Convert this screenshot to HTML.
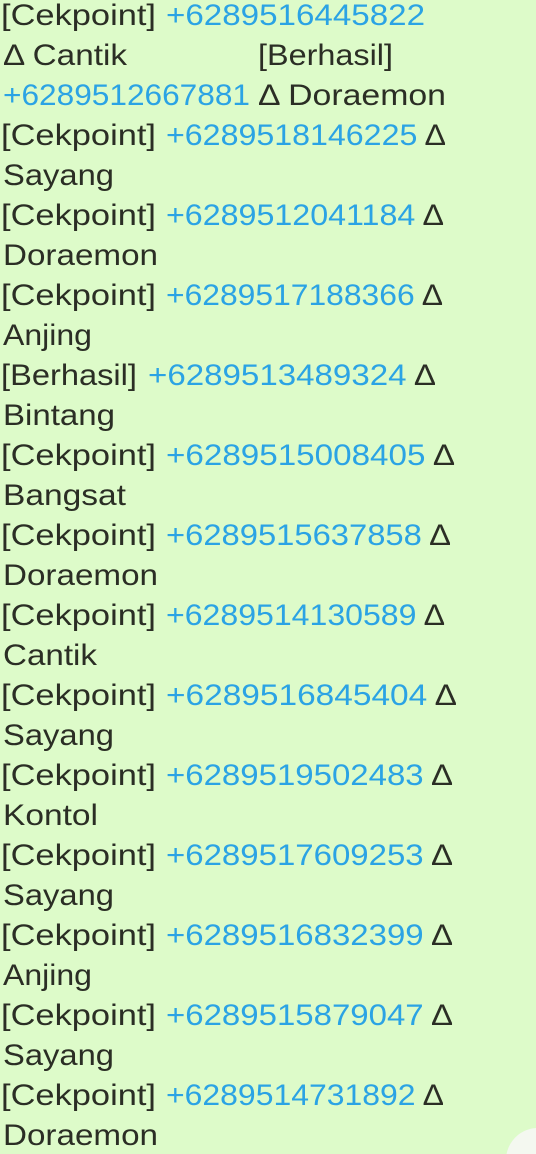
<!DOCTYPE html>
<html><head><meta charset="utf-8"><style>
html,body{margin:0;padding:0;background:#ddfbc9;width:536px;height:1154px;overflow:hidden}
svg{display:block}
text{font-family:"Liberation Sans",sans-serif;font-size:30px;fill:#2b2e25}
.b{fill:#2ba3e4}
</style></head><body>
<svg width="536" height="1154" viewBox="0 0 536 1154">
<text x="1" y="25" textLength="155" lengthAdjust="spacingAndGlyphs">[Cekpoint]</text>
<text x="166" y="25" textLength="259" lengthAdjust="spacingAndGlyphs" class="b">+6289516445822</text>
<text x="3" y="65" textLength="124" lengthAdjust="spacingAndGlyphs">Δ Cantik</text>
<text x="258" y="65" textLength="135" lengthAdjust="spacingAndGlyphs">[Berhasil]</text>
<text x="3" y="105" textLength="247" lengthAdjust="spacingAndGlyphs" class="b">+6289512667881</text>
<text x="258" y="105" textLength="188" lengthAdjust="spacingAndGlyphs">Δ Doraemon</text>

<text x="1" y="145" textLength="155" lengthAdjust="spacingAndGlyphs">[Cekpoint]</text>
<text x="166" y="145" textLength="280" lengthAdjust="spacingAndGlyphs"><tspan class="b">+6289518146225</tspan> Δ</text>
<text x="3" y="185" textLength="111" lengthAdjust="spacingAndGlyphs">Sayang</text>
<text x="1" y="225" textLength="155" lengthAdjust="spacingAndGlyphs">[Cekpoint]</text>
<text x="166" y="225" textLength="278" lengthAdjust="spacingAndGlyphs"><tspan class="b">+6289512041184</tspan> Δ</text>
<text x="3" y="265" textLength="155" lengthAdjust="spacingAndGlyphs">Doraemon</text>
<text x="1" y="305" textLength="155" lengthAdjust="spacingAndGlyphs">[Cekpoint]</text>
<text x="166" y="305" textLength="277" lengthAdjust="spacingAndGlyphs"><tspan class="b">+6289517188366</tspan> Δ</text>
<text x="3" y="345" textLength="89" lengthAdjust="spacingAndGlyphs">Anjing</text>
<text x="1" y="385" textLength="136" lengthAdjust="spacingAndGlyphs">[Berhasil]</text>
<text x="148" y="385" textLength="288" lengthAdjust="spacingAndGlyphs"><tspan class="b">+6289513489324</tspan> Δ</text>
<text x="3" y="425" textLength="112" lengthAdjust="spacingAndGlyphs">Bintang</text>
<text x="1" y="465" textLength="155" lengthAdjust="spacingAndGlyphs">[Cekpoint]</text>
<text x="166" y="465" textLength="289" lengthAdjust="spacingAndGlyphs"><tspan class="b">+6289515008405</tspan> Δ</text>
<text x="3" y="505" textLength="123" lengthAdjust="spacingAndGlyphs">Bangsat</text>
<text x="1" y="545" textLength="155" lengthAdjust="spacingAndGlyphs">[Cekpoint]</text>
<text x="166" y="545" textLength="285" lengthAdjust="spacingAndGlyphs"><tspan class="b">+6289515637858</tspan> Δ</text>
<text x="3" y="585" textLength="155" lengthAdjust="spacingAndGlyphs">Doraemon</text>
<text x="1" y="625" textLength="155" lengthAdjust="spacingAndGlyphs">[Cekpoint]</text>
<text x="166" y="625" textLength="279" lengthAdjust="spacingAndGlyphs"><tspan class="b">+6289514130589</tspan> Δ</text>
<text x="3" y="665" textLength="94" lengthAdjust="spacingAndGlyphs">Cantik</text>
<text x="1" y="705" textLength="155" lengthAdjust="spacingAndGlyphs">[Cekpoint]</text>
<text x="166" y="705" textLength="291" lengthAdjust="spacingAndGlyphs"><tspan class="b">+6289516845404</tspan> Δ</text>
<text x="3" y="745" textLength="111" lengthAdjust="spacingAndGlyphs">Sayang</text>
<text x="1" y="785" textLength="155" lengthAdjust="spacingAndGlyphs">[Cekpoint]</text>
<text x="166" y="785" textLength="287" lengthAdjust="spacingAndGlyphs"><tspan class="b">+6289519502483</tspan> Δ</text>
<text x="3" y="825" textLength="95" lengthAdjust="spacingAndGlyphs">Kontol</text>
<text x="1" y="865" textLength="155" lengthAdjust="spacingAndGlyphs">[Cekpoint]</text>
<text x="166" y="865" textLength="287" lengthAdjust="spacingAndGlyphs"><tspan class="b">+6289517609253</tspan> Δ</text>
<text x="3" y="905" textLength="111" lengthAdjust="spacingAndGlyphs">Sayang</text>
<text x="1" y="945" textLength="155" lengthAdjust="spacingAndGlyphs">[Cekpoint]</text>
<text x="166" y="945" textLength="287" lengthAdjust="spacingAndGlyphs"><tspan class="b">+6289516832399</tspan> Δ</text>
<text x="3" y="985" textLength="89" lengthAdjust="spacingAndGlyphs">Anjing</text>
<text x="1" y="1025" textLength="155" lengthAdjust="spacingAndGlyphs">[Cekpoint]</text>
<text x="166" y="1025" textLength="287" lengthAdjust="spacingAndGlyphs"><tspan class="b">+6289515879047</tspan> Δ</text>
<text x="3" y="1065" textLength="111" lengthAdjust="spacingAndGlyphs">Sayang</text>
<text x="1" y="1105" textLength="155" lengthAdjust="spacingAndGlyphs">[Cekpoint]</text>
<text x="166" y="1105" textLength="278" lengthAdjust="spacingAndGlyphs"><tspan class="b">+6289514731892</tspan> Δ</text>
<text x="3" y="1145" textLength="155" lengthAdjust="spacingAndGlyphs">Doraemon</text>
<circle cx="538" cy="1160" r="32" fill="#f4f8f0"/>
</svg>
</body></html>
